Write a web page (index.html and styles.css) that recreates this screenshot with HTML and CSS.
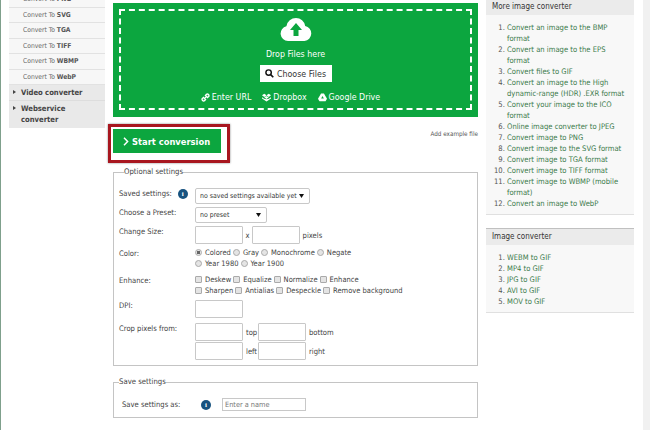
FILE: index.html
```html
<!DOCTYPE html>
<html lang="en">
<head>
<meta charset="utf-8">
<title>Image converter</title>
<link rel="stylesheet" href="styles.css">
</head>
<body>
<div class="page">
  <nav class="sidebar">
    <a class="sub">Convert To <b>PNG</b></a>
    <a class="sub">Convert To <b>SVG</b></a>
    <a class="sub">Convert To <b>TGA</b></a>
    <a class="sub">Convert To <b>TIFF</b></a>
    <a class="sub">Convert To <b>WBMP</b></a>
    <a class="sub">Convert To <b>WebP</b></a>
    <a class="cat"><span class="tri"></span><span>Video converter</span></a>
    <a class="cat"><span class="tri"></span><span>Webservice converter</span></a>
  </nav>
  <main class="main">
    <section class="drop">
      <div class="dash">
        <svg class="cloud" width="32" height="24" viewBox="0 0 32 24"><path fill="#fff" d="M8 24a7.500 7.500 0 0 1-1.600-14.800A9.800 9.800 0 0 1 16 1a9.500 9.500 0 0 1 9.200 8 7.600 7.600 0 0 1-.7 15z"/><path fill="#0ca63f" d="M16 6l6 7h-3.500v6h-5v-6H10z"/></svg>
        <div class="drop-text">Drop Files here</div>
        <button class="choose"><svg width="9" height="9" viewBox="0 0 10 10"><circle cx="4" cy="4" r="3" fill="none" stroke="#111" stroke-width="1.600"/><path d="M6 6l3.200 3.200" stroke="#111" stroke-width="1.800"/></svg>Choose Files</button>
        <div class="sources">
          <span class="src"><svg width="9" height="9" viewBox="0 0 10 10"><path d="M3 7l4-4" stroke="#fff" stroke-width="1.500"/><path d="M4.500 3.500l1.500-2a1.800 1.800 0 0 1 2.500 2.500l-2 1.500M5.500 6.500l-1.500 2a1.800 1.800 0 0 1-2.500-2.500l2-1.500" fill="none" stroke="#fff" stroke-width="1.500"/></svg>Enter URL</span>
          <span class="src"><svg width="9" height="9" viewBox="0 0 10 10"><path fill="#fff" d="M2.500.8L5 2.600 2.500 4.400 0 2.600zM7.500.8L10 2.600 7.500 4.400 5 2.600zM2.500 4.800L5 3.400v.1L7.500 4.800 5 6.600zM0 4.600l2.500 1.800L5 7l2.500-.6L10 4.600V6L5 9.400 0 6z"/></svg>Dropbox</span>
          <span class="src"><svg width="9" height="9" viewBox="0 0 10 10"><path fill="#fff" d="M3.400.5h3.200L10 6.500 8.400 9.300H1.600L0 6.500z"/><path fill="#0ca63f" d="M5 3.400L3.500 6.200h3z"/></svg>Google Drive</span>
        </div>
      </div>
    </section>
    <div class="action-row">
      <div class="highlight"><button class="start"><svg class="chev" width="6" height="9" viewBox="0 0 6 9"><path d="M1 .8L4.600 4.500 1 8.200" fill="none" stroke="#fff" stroke-width="1.500"/></svg>Start conversion</button></div>
      <a class="example">Add example file</a>
    </div>
    <fieldset class="box optional">
      <legend>Optional settings</legend>
      <div class="row r-saved"><label>Saved settings:<span class="info">i</span></label>
        <select class="sel-saved"><option>no saved settings available yet</option></select></div>
      <div class="row r-preset"><label>Choose a Preset:</label>
        <select class="sel-preset"><option>no preset</option></select></div>
      <div class="row r-size"><label>Change Size:</label>
        <div class="inline"><input class="field" type="text"><span>x</span><input class="field" type="text"><span>pixels</span></div></div>
      <div class="row r-color"><label>Color:</label>
        <div class="opts">
          <div><input type="radio" name="c" checked>Colored<input type="radio" name="c">Gray<input type="radio" name="c">Monochrome<input type="radio" name="c">Negate</div>
          <div><input type="radio" name="c">Year 1980<input type="radio" name="c">Year 1900</div>
        </div></div>
      <div class="row r-enh"><label>Enhance:</label>
        <div class="opts">
          <div><input type="checkbox">Deskew<input type="checkbox">Equalize<input type="checkbox">Normalize<input type="checkbox">Enhance</div>
          <div><input type="checkbox">Sharpen<input type="checkbox">Antialias<input type="checkbox">Despeckle<input type="checkbox">Remove background</div>
        </div></div>
      <div class="row r-dpi"><label>DPI:</label><input class="field" type="text"></div>
      <div class="row r-crop"><label>Crop pixels from:</label>
        <div class="crop">
          <input class="field" type="text"><span>top</span><input class="field" type="text"><span>bottom</span>
          <input class="field" type="text"><span>left</span><input class="field" type="text"><span>right</span>
        </div></div>
    </fieldset>
    <fieldset class="box save">
      <legend>Save settings</legend>
      <div class="save-row"><label>Save settings as:</label><span class="info">i</span><input class="name" type="text" placeholder="Enter a name"></div>
    </fieldset>
  </main>
  <aside class="right">
    <section class="panel p1">
      <h3>More image converter</h3>
      <ol>
        <li><a>Convert an image to the BMP format</a></li>
        <li><a>Convert an image to the EPS format</a></li>
        <li><a>Convert files to GIF</a></li>
        <li><a>Convert an image to the High dynamic-range (HDR) .EXR format</a></li>
        <li><a>Convert your image to the ICO format</a></li>
        <li><a>Online image converter to JPEG</a></li>
        <li><a>Convert image to PNG</a></li>
        <li><a>Convert image to the SVG format</a></li>
        <li><a>Convert image to TGA format</a></li>
        <li><a>Convert image to TIFF format</a></li>
        <li><a>Convert image to WBMP (mobile format)</a></li>
        <li><a>Convert an image to WebP</a></li>
      </ol>
    </section>
    <section class="panel p2">
      <h3>Image converter</h3>
      <ol>
        <li><a>WEBM to GIF</a></li>
        <li><a>MP4 to GIF</a></li>
        <li><a>JPG to GIF</a></li>
        <li><a>AVI to GIF</a></li>
        <li><a>MOV to GIF</a></li>
      </ol>
    </section>
  </aside>
  <div class="gutter"></div>
</div>
</body>
</html>
```
FILE: styles.css
```css
* { box-sizing: border-box; }
html, body { margin: 0; height: 100%; overflow: hidden; background: #fff; }
body { font: 7.600px/11px "DejaVu Sans Condensed", "DejaVu Sans", sans-serif; color: #444; }
.page { display: flex; width: 650px; height: 430px; overflow: hidden; border-left: 1px solid #7fa08c; }

.sidebar { width: 96px; margin: -8px 0 0 8px; flex: none; align-self: flex-start; }
.sub { display: block; height: 15.500px; line-height: 14px; padding-left: 14px; font-size: 6.700px; color: #666; background: #f7f7f7; border-bottom: 1px solid #e2e2e2; }
.sub b { color: #555; }
.cat { display: flex; align-items: flex-start; background: #e9e9e9; border-bottom: 1px solid #ddd; font-weight: bold; font-size: 7.600px; color: #444; padding: 2px 4px 2px 4px; line-height: 11px; }
.cat:last-child { border-bottom: 0; padding-bottom: 3px; }
.tri { flex: none; border-left: 3px solid #444; border-top: 2.500px solid transparent; border-bottom: 2.500px solid transparent; margin: 3px 5px 0 0; }

.main { width: 365px; margin: 3px 0 0 8px; flex: none; }
.drop { height: 114px; background: #0ca63f; padding: 6px; }
.dash { height: 101px; border: 2px dashed #fff; color: #fff; display: flex; flex-direction: column; align-items: center; padding-top: 6px; font-size: 8.800px; }
.cloud { display: block; }
.drop-text { margin-top: 7px; line-height: 12px; }
.choose { display: flex; align-items: center; gap: 3px; margin-top: 5px; width: 72px; height: 17px; padding: 0; justify-content: center; border: 0; background: #fff; color: #333; font: 8.800px "DejaVu Sans Condensed", "DejaVu Sans", sans-serif; }
.sources { display: flex; gap: 11px; margin: 9px 10px 0 0; line-height: 12px; }
.src { display: flex; align-items: center; gap: 2px; }

.action-row { display: flex; justify-content: space-between; align-items: flex-start; margin-left: -5px; margin-top: 7px; height: 43px; }
.highlight { width: 122px; height: 39px; border: 3px solid #a8161f; box-shadow: 0 0 2px #888; padding: 2px; }
.start { display: flex; align-items: center; gap: 3px; width: 108px; height: 24px; padding: 0 0 0 10px; border: 0; background: #0ca63f; color: #fff; font: bold 9.300px "DejaVu Sans Condensed", "DejaVu Sans", sans-serif; }
.example { font-size: 6.300px; color: #555; margin-top: 4px; }

.box { margin: 0; padding: 0; border: 1px solid #c4c4c4; }
.box legend { margin-left: 5px; padding: 0; font-size: 7.700px; line-height: 10px; color: #444; }
.optional { height: 199px; padding: 11px 0 0 5px; }
.row { display: grid; grid-template-columns: 76px 1fr; align-items: start; }
.row label { display: flex; align-items: center; white-space: nowrap; }
.info { display: inline-block; flex: none; width: 10px; height: 10px; border-radius: 50%; background: #17527f; color: #fff; font: bold 7px/10px "Liberation Serif", serif; text-align: center; }
.row .info { margin-left: 6px; }
.r-saved { height: 19px; }
.r-preset { height: 19px; }
.r-size { height: 22px; }
.r-color { height: 27px; }
.r-enh { height: 25px; }
.r-dpi { height: 23px; }
.r-color .opts { margin-top: -1px; }
.r-enh .opts { margin-top: -1px; }
select { appearance: none; height: 16px; border: 1px solid #c8c8c8; border-radius: 2px; background: #fff url("data:image/svg+xml,%3Csvg xmlns='http://www.w3.org/2000/svg' width='5' height='4'%3E%3Cpath d='M0 0h5L2.500 4z' fill='%23111'/%3E%3C/svg%3E") no-repeat right 5px center; font: 6.900px "DejaVu Sans Condensed", "DejaVu Sans", sans-serif; color: #333; padding: 0 0 0 4px; }
.sel-saved { width: 115px; }
.sel-preset { width: 72px; }
.field { width: 48px; height: 18px; border: 1px solid #c8c8c8; border-radius: 1px; background: #fff; padding: 0; }
.inline { display: flex; align-items: center; gap: 2.500px; }
.opts { line-height: 11px; font-size: 7.500px; }
.opts input { appearance: none; width: 7px; height: 7px; margin: 0 3px 0 2px; vertical-align: -1px; border: 1px solid #aaa; background: #e4e4e4; }
.opts input:first-child { margin-left: 0; }
.opts input[type="radio"] { border-radius: 50%; }
.opts input[type="checkbox"] { border-radius: 1px; }
.opts input:checked { background: radial-gradient(circle, #666 40%, #e4e4e4 55%); }
.crop { display: grid; grid-template-columns: 48px 15px 48px auto; row-gap: 1px; align-items: center; justify-content: start; }
.crop span { padding-left: 3px; }

.save { height: 41px; margin-top: 11px; }
.save-row { display: flex; align-items: center; padding: 11px 0 0 8px; }
.save-row label { width: 79px; }
.save-row .name { width: 84px; height: 13px; margin-left: 11px; border: 1px solid #c8c8c8; padding: 0 2px; font: 7.300px "DejaVu Sans Condensed", "DejaVu Sans", sans-serif; background: #fff; }
.name::placeholder { color: #777; }

.right { width: 148px; margin: -1px 0 0 8px; flex: none; }
.panel { background: #f8f8f8; border-bottom: 1px solid #e0e0e0; }
.panel h3 { margin: 0; height: 16px; padding: 0 0 0 6px; background: #ebebeb; font-size: 8px; font-weight: normal; line-height: 15px; color: #333; }
.panel ol { margin: 0; padding: 7px 4px 4px 21px; color: #555; }
.panel li a { color: #3b7a4b; }
.p1 { height: 216px; }
.p2 { height: 85px; margin-top: 13px; border-top: 1px solid #c0c0c0; }
.gutter { width: 7px; margin-left: 9px; background: #f1f1f1; flex: none; }
```
